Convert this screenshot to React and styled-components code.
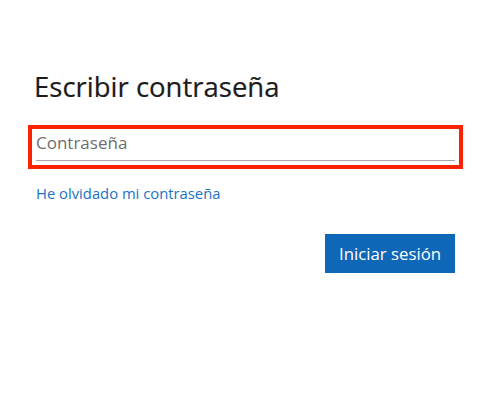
import React from 'react'
import styled, {createGlobalStyle} from 'styled-components'

const GlobalStyle = createGlobalStyle`
    html, body {
        margin: 0;
        padding: 0;
        background: #ffffff;
    }
    body {
        font-family: "Open Sans", "Noto Sans", "Liberation Sans", sans-serif;
    }
`

const Page = styled.div`
    width: 500px;
    height: 400px;
    box-sizing: border-box;
    padding: 69px 45px 0 36px;
`

const Title = styled.h1`
    margin: 0 0 0 -2px;
    font-size: 27.5px;
    line-height: 36px;
    font-weight: 400;
    color: #1b1b1b;
    -webkit-text-stroke: 0.2px #1b1b1b;
`

const Form = styled.form`
    display: flex;
    flex-direction: column;
    margin-top: 28px;
`

const Input = styled.input`
    box-sizing: border-box;
    width: 100%;
    height: 28px;
    padding: 0 0 9px 0;
    border: none;
    border-bottom: 1px solid #a6a6a6;
    outline: 4px solid #fa2200;
    outline-offset: 4px;
    font-family: inherit;
    font-size: 17px;
    color: #1b1b1b;
    background: transparent;

    &::placeholder {
        color: #6e6e6e;
    }
`

const Link = styled.a`
    margin-top: 22px;
    font-size: 14.8px;
    line-height: 20px;
    color: #1a73c4;
    text-decoration: none;
    align-self: flex-start;
`

const Actions = styled.div`
    display: flex;
    justify-content: flex-end;
    margin-top: 31px;
`

const Button = styled.button`
    width: 130px;
    height: 39px;
    border: none;
    background: #0f67b8;
    color: #ffffff;
    font-family: inherit;
    font-size: 16.8px;
    font-weight: 500;
    padding: 0 0 1px 0;
`

function App() {
    return (
        <>
            <GlobalStyle/>
            <Page>
                <Title>Escribir contraseña</Title>
                <Form onSubmit={e => e.preventDefault()}>
                    <Input type="password" placeholder="Contraseña"/>
                    <Link href="#">He olvidado mi contraseña</Link>
                    <Actions>
                        <Button type="submit">Iniciar sesión</Button>
                    </Actions>
                </Form>
            </Page>
        </>
    )
}

export default App
